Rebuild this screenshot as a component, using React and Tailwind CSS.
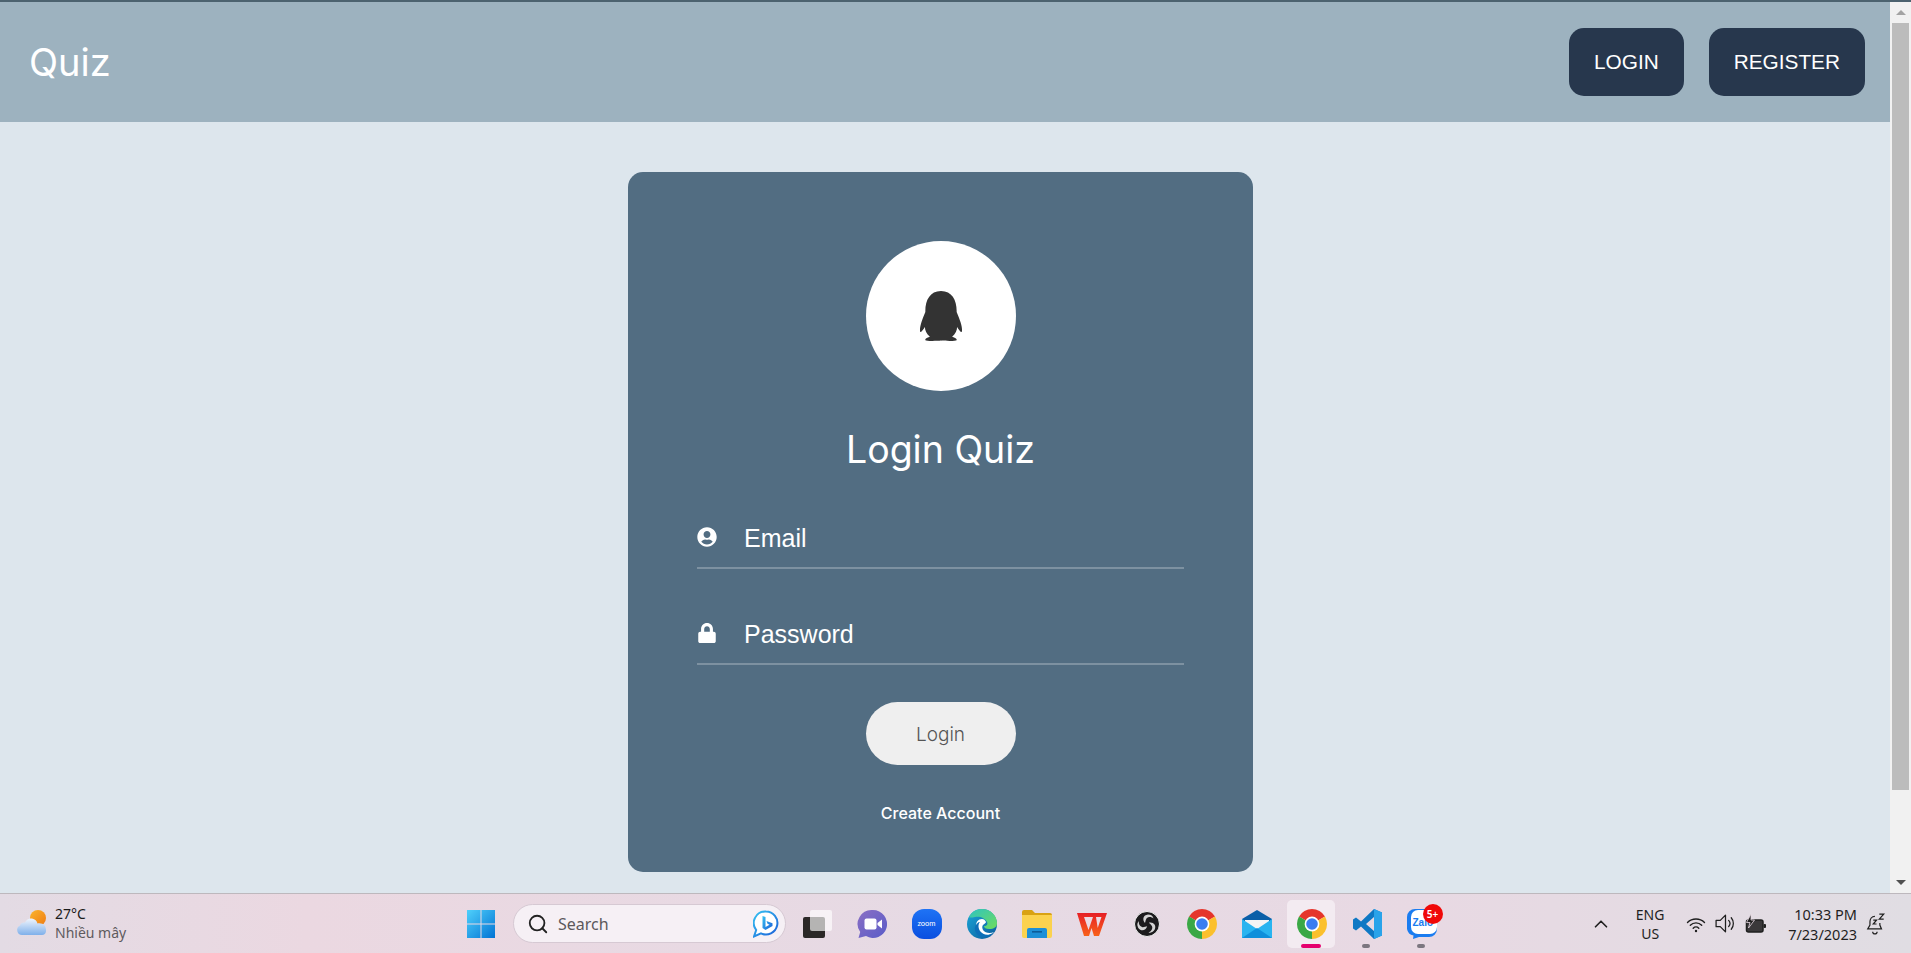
import { FaQq, FaUserCircle, FaLock } from "react-icons/fa";
import { Search, ChevronUp } from "lucide-react";

const sans = "font-['Liberation_Sans',Arial,sans-serif]";
const geo = "font-['Inter','Lato',sans-serif]";
const win = "font-['Noto_Sans','Open_Sans',sans-serif]";

function ChromeIcon() {
  return (
    <svg width="30" height="30" viewBox="0 0 30 30">
      <path d="M15 15L2.01 7.5A15 15 0 0 1 27.99 7.5Z" fill="#e5352b" />
      <path d="M15 15L27.99 7.5A15 15 0 0 1 15 30Z" fill="#fbc02d" />
      <path d="M15 15L15 30A15 15 0 0 1 2.01 7.5Z" fill="#3aa845" />
      <circle cx="15" cy="15" r="7.4" fill="#fff" />
      <circle cx="15" cy="15" r="5.8" fill="#3b7df0" />
    </svg>
  );
}

function WindowsIcon() {
  return (
    <svg width="30" height="30" viewBox="0 0 30 30">
      <defs>
        <linearGradient id="winBlue" x1="0" y1="0" x2="1" y2="1">
          <stop offset="0" stopColor="#4fd0fb" />
          <stop offset="1" stopColor="#0273d4" />
        </linearGradient>
      </defs>
      <path d="M1 1h13.500v13.500H1zM15.500 1H29v13.500H15.500zM1 15.500h13.500V29H1zM15.500 15.500H29V29H15.500z" fill="url(#winBlue)" />
    </svg>
  );
}

function TaskViewIcon() {
  return (
    <svg width="30" height="30" viewBox="0 0 30 30">
      <rect x="1" y="8" width="22" height="21" rx="2" fill="#2b2827" />
      <rect x="8" y="1" width="22" height="21" rx="2" fill="#fff" fillOpacity="0.65" />
    </svg>
  );
}

function MeetIcon() {
  return (
    <svg width="30" height="30" viewBox="0 0 30 30">
      <defs>
        <linearGradient id="meetPurple" x1="0" y1="0" x2="1" y2="1">
          <stop offset="0" stopColor="#8a6fc4" />
          <stop offset="1" stopColor="#5a5cc8" />
        </linearGradient>
      </defs>
      <path d="M16 1a14 14 0 1 1-7 26.100L1.500 29l1.700-6A14 14 0 0 1 16 1z" fill="url(#meetPurple)" />
      <rect x="7.500" y="9.500" width="12" height="11" rx="2" fill="#fff" />
      <path d="M20.500 14l4.500-3.500v9L20.500 16z" fill="#fff" />
    </svg>
  );
}

function ZoomIcon() {
  return (
    <div className="flex h-[30px] w-[30px] items-center justify-center rounded-[12px] bg-gradient-to-b from-[#1f73f5] to-[#0b4ee0]">
      <span className="font-['Lato',sans-serif] text-[7.5px] leading-none text-white">zoom</span>
    </div>
  );
}

function EdgeIcon() {
  return (
    <svg width="30" height="30" viewBox="0 0 30 30">
      <defs>
        <linearGradient id="edgeBlue" x1="0" y1="0" x2="1" y2="1">
          <stop offset="0" stopColor="#1ba7d8" />
          <stop offset="1" stopColor="#0b5b9c" />
        </linearGradient>
        <linearGradient id="edgeGreen" x1="0" y1="0" x2="1" y2="1">
          <stop offset="0" stopColor="#2fc4c0" />
          <stop offset="1" stopColor="#6fdc5c" />
        </linearGradient>
      </defs>
      <circle cx="15" cy="15" r="15" fill="url(#edgeBlue)" />
      <path d="M2 8C5 2 10 0 15 0c9 0 15 7 15 14 0 4-3 6-8 6-3 0-5-1-5-3 3 0 4-2 3-4-2-4-7-6-12-5-3 .5-5 1-6 0z" fill="url(#edgeGreen)" />
      <path d="M15 10c-4 0-6 3-6 7 0 6 6 11 13 9 2-.6 4-2 5-3-4 2-9 1-11-2-1-2-1-4 0-5 1-1 3-2 3-3-1-2-2-3-4-3z" fill="#fff" />
      <path d="M13 13c-2 2-2 6 0 9 3 4 8 5 13 2-3 3-7 5-11 4-5-1-8-6-7-10 1-3 3-5 5-5z" fill="#0d6fb8" />
    </svg>
  );
}

function FolderIcon() {
  return (
    <svg width="30" height="28" viewBox="0 0 30 28">
      <path d="M0 2a2 2 0 0 1 2-2h8l3 3h15a2 2 0 0 1 2 2v3H0z" fill="#d9a213" />
      <path d="M0 5h30v21a2 2 0 0 1-2 2H2a2 2 0 0 1-2-2z" fill="#fbd24e" />
      <path d="M5 20a2 2 0 0 1 2-2h16a2 2 0 0 1 2 2v8H5z" fill="#1c8fd6" />
      <rect x="10" y="21" width="10" height="1.600" fill="#0b5c99" />
    </svg>
  );
}

function WpsIcon() {
  return (
    <svg width="30" height="24" viewBox="0 0 30 24">
      <defs>
        <linearGradient id="wpsFill" x1="0" y1="0" x2="0" y2="1">
          <stop offset="0" stopColor="#e61f26" />
          <stop offset="1" stopColor="#f8621a" />
        </linearGradient>
      </defs>
      <path d="M0 1h30l-8 23h-5l-2.500-8-2.500 8H7z" fill="url(#wpsFill)" />
      <path d="M7 5h9l-4.500 13z" fill="#eadbe4" />
      <path d="M19 5h5.500l-3.800 11z" fill="#eadbe4" />
    </svg>
  );
}

function ObsIcon() {
  const blade = "M11 12C8 9 9 4 14 3.500C17 3.500 19 5 19.500 7.500C17.500 5.500 14 5.500 12.500 7.500C11.500 9 11.500 10.500 11 12Z";
  return (
    <svg width="26" height="26" viewBox="0 0 26 26">
      <circle cx="13" cy="13" r="12.500" fill="#1c1b1d" stroke="#f0f0f0" strokeWidth="1" />
      <g fill="#d4d4d4">
        <path d={blade} />
        <path d={blade} transform="rotate(120 13 13)" />
        <path d={blade} transform="rotate(240 13 13)" />
      </g>
    </svg>
  );
}

function MailIcon() {
  return (
    <svg width="30" height="28" viewBox="0 0 30 28">
      <path d="M0 9L15 0l15 9v5H0z" fill="#0b5fa8" />
      <path d="M3 10h24v9H3z" fill="#f4f4f4" />
      <path d="M0 9l15 10L30 9v19H0z" fill="#29b4f0" />
      <path d="M0 28l15-10 15 10z" fill="#0f8fdb" />
    </svg>
  );
}

function VsCodeIcon() {
  return (
    <svg width="30" height="30" viewBox="0 0 30 30">
      <path d="M22 0l8 3.500v23L22 30 9 17.500l-5 4L1 19.500v-9L4 8.500l5 4zM22 8l-8 7 8 7z" fill="#0e78c4" />
      <path d="M22 0l8 3.500v23L22 30z" fill="#29a3ea" />
    </svg>
  );
}

function ZaloIcon() {
  return (
    <div className="relative h-[30px] w-[30px]">
      <svg width="30" height="30" viewBox="0 0 30 30">
        <path d="M8 0h14a8 8 0 0 1 8 8v12a8 8 0 0 1-8 8H12l-6 2 .5-3.500A8 8 0 0 1 0 20V8a8 8 0 0 1 8-8z" fill="#1a7cf0" />
        <rect x="4" y="1" width="26" height="24" rx="7" fill="#fff" />
      </svg>
      <span className={`absolute left-[6px] top-[9px] text-[10px] font-bold leading-none text-[#1a7cf0] ${sans}`}>Zalo</span>
      <span className={`absolute left-[16px] top-[-5px] flex h-5 w-5 items-center justify-center rounded-full bg-[#f00808] text-[10px] font-semibold leading-none text-white ${win}`}>5+</span>
    </div>
  );
}

function WeatherIcon() {
  return (
    <svg width="32" height="28" viewBox="0 0 32 28">
      <defs>
        <linearGradient id="sunFill" x1="0" y1="0" x2="1" y2="1">
          <stop offset="0" stopColor="#fbb52c" />
          <stop offset="1" stopColor="#ef7a12" />
        </linearGradient>
        <linearGradient id="cloudFill" x1="0" y1="0" x2="0" y2="1">
          <stop offset="0" stopColor="#f0f5fd" />
          <stop offset="1" stopColor="#7fb0ea" />
        </linearGradient>
      </defs>
      <circle cx="22" cy="8" r="8" fill="url(#sunFill)" />
      <path d="M6 25a5 5 0 0 1-2-9.500c.5-2.500 3-3.500 5-3 1.500-3 4-4.500 7-4 3 .5 5 2.500 5.500 5 1-.5 6-.5 7.500 2.500 1.500 3.500 2 9-3 9z" fill="url(#cloudFill)" />
    </svg>
  );
}

function BingIcon() {
  return (
    <svg width="26" height="28" viewBox="0 0 26 28">
      <defs>
        <linearGradient id="bingRing" x1="0" y1="0" x2="1" y2="1">
          <stop offset="0" stopColor="#35c1f1" />
          <stop offset="1" stopColor="#1b5fd8" />
        </linearGradient>
      </defs>
      <path d="M13 1.500a11.500 11.500 0 1 1-5 21.900L1 26.500l2.200-6.500A11.500 11.500 0 0 1 13 1.500z" fill="#fff" stroke="url(#bingRing)" strokeWidth="2" />
      <path d="M9.500 6l3 1v10l4-2.300-2-1-1-2.700 6 2.200v2.800l-7 4-3-2z" fill="url(#bingRing)" />
    </svg>
  );
}

function WifiIcon() {
  return (
    <svg width="24" height="20" viewBox="0 0 24 20" fill="none" stroke="#1f1f1f" strokeWidth="1.400" strokeLinecap="round">
      <path d="M3.500 8.500a12 12 0 0 1 17 0" />
      <path d="M6.300 11.300a8 8 0 0 1 11.400 0" />
      <path d="M9.200 14.200a4 4 0 0 1 5.600 0" />
      <circle cx="12" cy="17" r="1.200" fill="#1f1f1f" stroke="none" />
    </svg>
  );
}

function SpeakerIcon() {
  return (
    <svg width="23" height="23" viewBox="0 0 22 22" fill="none" stroke="#1f1f1f" strokeWidth="1.200" strokeLinecap="round" strokeLinejoin="round">
      <path d="M2 8h4l5-5v16l-5-5H2z" />
      <path d="M14 8a4.500 4.500 0 0 1 0 6" />
      <path d="M16.500 5.500a8.500 8.500 0 0 1 0 11" />
    </svg>
  );
}

function BatteryIcon() {
  return (
    <svg width="22" height="20" viewBox="0 0 22 20">
      <rect x="1.500" y="6" width="16.500" height="12" rx="2" fill="#3a383a" stroke="#1f1f1f" strokeWidth="1.500" />
      <rect x="18.500" y="10" width="2.500" height="4" rx="1" fill="#1f1f1f" />
      <path d="M6 0L1.500 8.500h3.500L3.500 14 9.500 6H6z" fill="#1f1f1f" stroke="#e8dbe4" strokeWidth="0.800" />
    </svg>
  );
}

function BellSnooze() {
  return (
    <svg width="22" height="22" viewBox="0 0 20 20" fill="none" stroke="#1f1f1f" strokeWidth="1.100">
      <path d="M9 3c-3 0-4.500 2.500-4.500 5v3L2.500 14.500h12.500L13.500 11V9" />
      <path d="M7 17a2 2 0 0 0 4 0" />
      <path d="M7.500 6.500h3l-3 3.500h3" />
      <path d="M13 1h4l-4 4.500h4" />
    </svg>
  );
}

function TaskIcon({ children, active, running }) {
  return (
    <div className="relative flex h-[60px] w-[55px] items-center justify-center">
      {active && <div className="absolute left-[3px] top-[6px] h-[48px] w-[48px] rounded-[5px] bg-[#f3ebf1]" />}
      <div className="relative">{children}</div>
      {active && <div className="absolute bottom-[6px] left-[17px] h-[4px] w-[20px] rounded-full bg-[#e5006e]" />}
      {running && <div className="absolute bottom-[6px] left-[23px] h-[4px] w-[8px] rounded-full bg-[#7c7780]" />}
    </div>
  );
}

function Field({ icon, placeholder, type }) {
  return (
    <div className="flex h-[62px] w-full items-center border-b-2 border-white/25">
      <span className="flex w-[47px] shrink-0 text-[20px] text-white">{icon}</span>
      <input
        type={type}
        placeholder={placeholder}
        className={`w-full bg-transparent pt-[3px] text-[25px] text-white outline-none placeholder:text-white ${sans}`}
      />
    </div>
  );
}

export default function App() {
  return (
    <div className="flex h-screen flex-col overflow-hidden">
      <div className="h-[2px] bg-[#4c626f]" />

      <div className="flex min-h-0 flex-1">
        {/* page */}
        <div className="min-w-0 flex-1 bg-[#DDE6ED]">
          <nav className="flex h-[120px] items-center justify-between bg-[#9DB2BF] px-[25px]">
            <div className={`pl-[4px] text-[38px] text-white ${geo}`}>Quiz</div>
            <div className="flex gap-[25px]">
              <button className={`h-[68px] rounded-[15px] bg-[#27374D] px-[25px] text-[20.8px] text-white ${sans}`}>LOGIN</button>
              <button className={`h-[68px] rounded-[15px] bg-[#27374D] px-[25px] text-[20.8px] text-white ${sans}`}>REGISTER</button>
            </div>
          </nav>

          <div className="ml-[628px] mt-[50px] flex h-[700px] w-[625px] flex-col items-center rounded-[15px] bg-[#526D82] px-[69px] pt-[69px]">
            <div className="flex h-[150px] w-[150px] items-center justify-center rounded-full bg-white text-[50px] text-[#333]">
              <FaQq />
            </div>
            <h2 className={`mt-[34px] text-[37.5px] leading-[50px] text-white ${geo}`}>Login Quiz</h2>
            <div className="mt-[32px] w-full">
              <Field icon={<FaUserCircle />} placeholder="Email" type="text" />
            </div>
            <div className="mt-[34px] w-full">
              <Field icon={<FaLock />} placeholder="Password" type="password" />
            </div>
            <button className={`mt-[37px] h-[63px] w-[150px] rounded-[32px] bg-[#efefef] pt-[3px] text-[19px] font-light text-[#555] ${geo}`}>Login</button>
            <a className={`mt-[36px] text-[16px] font-medium text-white ${geo}`}>Create Account</a>
          </div>
        </div>

        {/* scrollbar */}
        <div className="flex w-[21px] flex-col items-center bg-[#f1f1f1]">
          <div className="flex h-[21px] items-center justify-center">
            <div className="h-0 w-0 border-x-[5px] border-b-[5px] border-x-transparent border-b-[#a3a3a3]" />
          </div>
          <div className="h-[767px] w-[17px] bg-[#bcbcbc]" />
          <div className="mt-auto flex h-[21px] items-center justify-center">
            <div className="h-0 w-0 border-x-[5px] border-t-[5px] border-x-transparent border-t-[#505050]" />
          </div>
        </div>
      </div>

      {/* windows taskbar */}
      <div className={`flex h-[60px] items-center border-t border-[#bdb8bd] bg-[linear-gradient(90deg,#e3dbe4,#ebd8e1_16%,#e6dae4_50%,#e8d9e3_75%,#e0dde3)] ${win}`}>
        <div className="flex w-[453px] shrink-0 items-center pl-[16px]">
          <WeatherIcon />
          <div className="ml-[7px] leading-none">
            <div className="text-[14px] leading-[18px] text-[#1b1b1b]">27°C</div>
            <div className="text-[14px] leading-[19px] text-[#5e5a5e]">Nhiều mây</div>
          </div>
        </div>

        <div className="flex w-[55px] justify-center"><WindowsIcon /></div>

        <div className="ml-[5px] flex h-[39px] w-[273px] items-center rounded-full border border-[#d6c9d3] bg-[#f6f0f5] pl-[13px] pr-[6px]">
          <Search size={22} strokeWidth={2} className="text-[#222]" />
          <span className="ml-[9px] text-[16px] text-[#5c585c]">Search</span>
          <span className="ml-auto flex"><BingIcon /></span>
        </div>

        <div className="ml-[3px] flex">
          <TaskIcon><TaskViewIcon /></TaskIcon>
          <TaskIcon><MeetIcon /></TaskIcon>
          <TaskIcon><ZoomIcon /></TaskIcon>
          <TaskIcon><EdgeIcon /></TaskIcon>
          <TaskIcon><FolderIcon /></TaskIcon>
          <TaskIcon><WpsIcon /></TaskIcon>
          <TaskIcon><ObsIcon /></TaskIcon>
          <TaskIcon><ChromeIcon /></TaskIcon>
          <TaskIcon><MailIcon /></TaskIcon>
          <TaskIcon active><ChromeIcon /></TaskIcon>
          <TaskIcon running><VsCodeIcon /></TaskIcon>
          <TaskIcon running><ZaloIcon /></TaskIcon>
        </div>

        <div className="ml-auto flex items-center pr-[24px]">
          <ChevronUp size={22} strokeWidth={1.800} className="text-[#1f1f1f]" />
          <div className="ml-[16px] w-[44px] text-center text-[14px] leading-[19px] text-[#1f1f1f]">
            <div>ENG</div>
            <div>US</div>
          </div>
          <span className="ml-[12px] flex"><WifiIcon /></span>
          <span className="ml-[6px] flex"><SpeakerIcon /></span>
          <span className="ml-[8px] flex"><BatteryIcon /></span>
          <div className="ml-[21px] text-right text-[14.5px] leading-[20px] text-[#1f1f1f]">
            <div>10:33 PM</div>
            <div>7/23/2023</div>
          </div>
          <span className="ml-[8px] flex"><BellSnooze /></span>
        </div>
      </div>
    </div>
  );
}
